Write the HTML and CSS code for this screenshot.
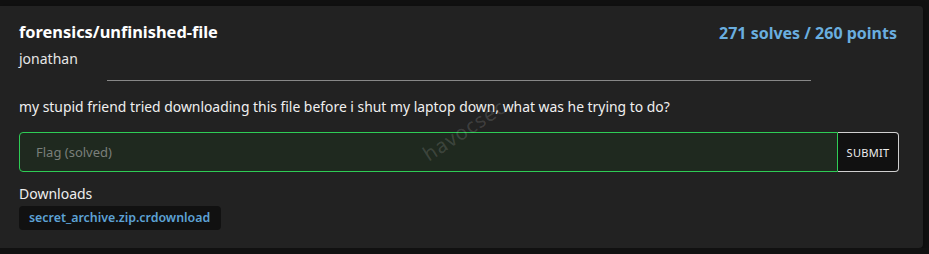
FILE: index.html
```html
<!DOCTYPE html>
<html>
<head>
<meta charset="utf-8">
<link rel="stylesheet" href="styles.css">
</head>
<body>
<div class="card">
  <div class="head">
    <div>
      <div class="title">forensics/unfinished-file</div>
      <div class="author">jonathan</div>
    </div>
    <div class="score">271 solves / 260 points</div>
  </div>
  <hr class="divider">
  <p class="desc">my stupid friend tried downloading this file before i shut my laptop down, what was he trying to do?</p>
  <form class="flag-form">
    <input class="flag-input" type="text" placeholder="Flag (solved)">
    <button class="submit" type="button">SUBMIT</button>
  </form>
  <div class="downloads-label">Downloads</div>
  <div class="downloads">
    <a class="file-tag">secret_archive.zip.crdownload</a>
  </div>
  <div class="watermark">havocsec</div>
</div>
</body>
</html>
```

FILE: styles.css
```css
html, body {
  margin: 0;
  padding: 0;
  background: #111;
  font-family: "Noto Sans", "Open Sans", sans-serif;
  color: #e6e6e6;
}
.card {
  position: relative;
  margin-top: 6px;
  width: 923px;
  height: 242px;
  box-sizing: border-box;
  background: #222;
  border-radius: 0 4px 4px 0;
  padding: 14px 24px 0 19px;
  box-shadow: 0 2px 6px rgba(0,0,0,0.5);
  overflow: hidden;
}
.head {
  display: flex;
  justify-content: space-between;
  align-items: flex-start;
  padding-right: 2px;
}
.title {
  font-size: 16.4px;
  font-weight: 700;
  line-height: 24px;
  color: #fff;
}
.author {
  font-size: 14px;
  line-height: 20px;
  margin-top: 5px;
  color: #e6e6e6;
}
.score {
  font-size: 16px;
  font-weight: 700;
  line-height: 24px;
  color: #6aaedf;
  margin-top: 1px;
}
.divider {
  width: 80%;
  margin: 11px auto 0;
  border: 0;
  border-top: 1px solid #888;
  height: 0;
}
.desc {
  margin: 16px 0 0;
  font-size: 13.9px;
  line-height: 20px;
  color: #f0f0f0;
}
.flag-form {
  display: flex;
  margin-top: 15px;
  height: 40px;
}
.flag-input {
  flex: 1;
  box-sizing: border-box;
  height: 40px;
  margin: 0;
  padding: 0 16px;
  background: #1f291f;
  border: 1px solid #2ecc55;
  border-radius: 4px 0 0 4px;
  font-family: inherit;
  font-size: 13px;
  color: #ddd;
  outline: none;
}
.flag-input::placeholder {
  color: #7a7f7a;
}
.submit {
  width: 61px;
  box-sizing: border-box;
  height: 40px;
  margin: 0;
  background: #111;
  border: 1px solid #d0d0d0;
  border-left: 0;
  border-radius: 0 4px 4px 0;
  color: #eee;
  font-family: inherit;
  font-size: 11px;
  letter-spacing: 0.3px;
  padding: 0;
}
.downloads-label {
  margin-top: 12px;
  font-size: 14px;
  line-height: 20px;
  color: #eee;
}
.downloads {
  display: flex;
  margin-top: 2px;
}
.file-tag {
  display: inline-block;
  background: #111;
  border-radius: 4px;
  padding: 0 11px 0 10px;
  height: 24px;
  line-height: 24px;
  font-size: 12.4px;
  font-weight: 600;
  color: #5da2d5;
}
.watermark {
  position: absolute;
  left: 432px;
  top: 134px;
  font-size: 20px;
  color: rgba(255,255,255,0.14);
  transform: rotate(-33deg);
  transform-origin: left bottom;
  letter-spacing: 1px;
  pointer-events: none;
}
```
